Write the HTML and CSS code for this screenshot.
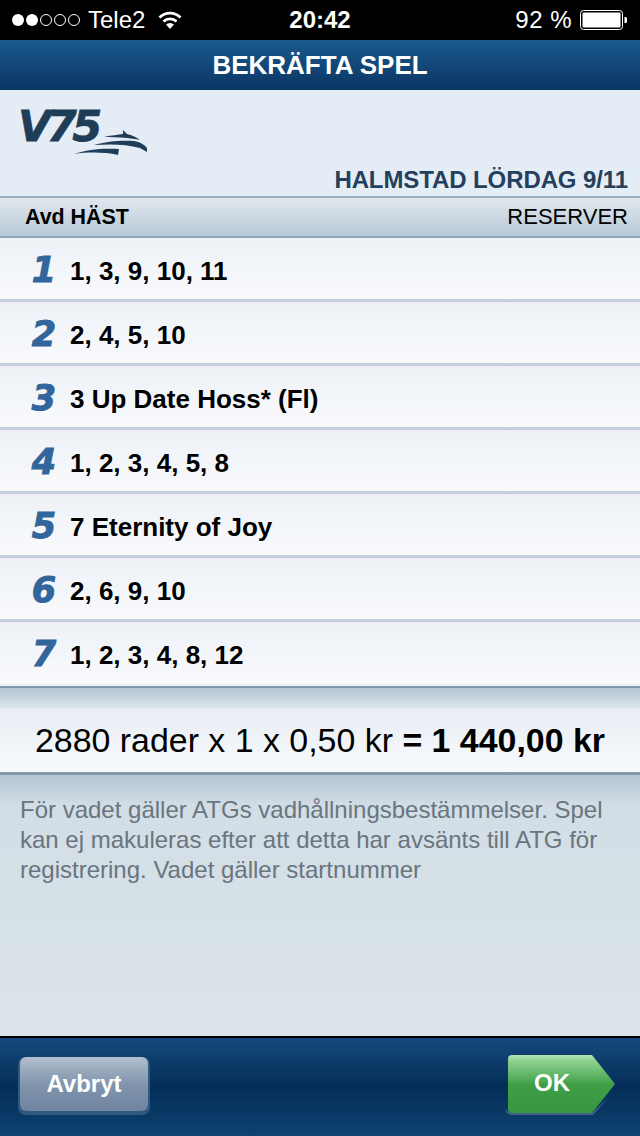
FILE: index.html
```html
<!DOCTYPE html>
<html>
<head>
  <meta charset="utf-8">
  <link rel="stylesheet" href="styles.css">
</head>
<body>
<div class="status">
  <div class="status-left">
    <svg class="signal" width="68" height="14" viewBox="0 0 68 14">
      <circle cx="6" cy="7" r="6" fill="#fff"/>
      <circle cx="20" cy="7" r="6" fill="#fff"/>
      <circle cx="34" cy="7" r="5.500" fill="none" stroke="#fff"/>
      <circle cx="48" cy="7" r="5.500" fill="none" stroke="#fff"/>
      <circle cx="62" cy="7" r="5.500" fill="none" stroke="#fff"/>
    </svg>
    <span class="carrier">Tele2</span>
    <svg class="wifi" width="24" height="18" viewBox="0 0 24 18">
      <path d="M1.500 6.500 A15 15 0 0 1 22.500 6.500" fill="none" stroke="#fff" stroke-width="2.800"/>
      <path d="M5.500 10.500 A9.500 9.500 0 0 1 18.500 10.500" fill="none" stroke="#fff" stroke-width="2.800"/>
      <path d="M12 18 L8 13.500 A6 6 0 0 1 16 13.500 Z" fill="#fff"/>
    </svg>
  </div>
  <div class="clock">20:42</div>
  <div class="status-right">
    <span>92 %</span>
    <svg width="48" height="20" viewBox="0 0 48 20">
      <rect x="0.500" y="0.500" width="42" height="19" rx="3" fill="none" stroke="#fff"/>
      <rect x="2.500" y="2.500" width="38" height="15" rx="1" fill="#fff"/>
      <path d="M44.500 7 h1 a1.500 1.500 0 0 1 1.500 1.500 v3 a1.500 1.500 0 0 1 -1.500 1.500 h-1 Z" fill="#fff"/>
    </svg>
  </div>
</div>

<header class="navbar">BEKRÄFTA SPEL</header>

<div class="game-head">
  <div class="logo">
    <span class="logo-text">V75</span>
    <svg class="logo-horse" width="74" height="28" viewBox="0 0 74 28">
      <path d="M30 9 C38 7 44 7 49 6 L49 2 L53 6 C58 7 62 9 66 12 C58 10 44 9 30 9 Z" fill="#1f3d57"/>
      <path d="M20 17 C32 13 50 12 60 13 C66 14 71 17 73 20 L73 24 L66 20 C52 16 36 16 20 17 Z" fill="#1f3d57"/>
      <path d="M0 26 C14 21 30 20 45 21 L44 27 C30 24 14 24 0 26 Z" fill="#1f3d57"/>
    </svg>
  </div>
  <div class="race">HALMSTAD LÖRDAG 9/11</div>
</div>

<div class="col-head">
  <span class="col-left">Avd HÄST</span>
  <span class="col-right">RESERVER</span>
</div>

<div class="rows">
  <div class="row"><span class="avd">1</span><span class="picks">1, 3, 9, 10, 11</span></div>
  <div class="row"><span class="avd">2</span><span class="picks">2, 4, 5, 10</span></div>
  <div class="row"><span class="avd">3</span><span class="picks">3 Up Date Hoss* (Fl)</span></div>
  <div class="row"><span class="avd">4</span><span class="picks">1, 2, 3, 4, 5, 8</span></div>
  <div class="row"><span class="avd">5</span><span class="picks">7 Eternity of Joy</span></div>
  <div class="row"><span class="avd">6</span><span class="picks">2, 6, 9, 10</span></div>
  <div class="row"><span class="avd">7</span><span class="picks">1, 2, 3, 4, 8, 12</span></div>
</div>

<div class="spacer"></div>

<div class="total">2880 rader x 1 x 0,50 kr <b>= 1 440,00 kr</b></div>

<div class="info">
  <p>För vadet gäller ATGs vadhållningsbestämmelser. Spel kan ej makuleras efter att detta har avsänts till ATG för registrering. Vadet gäller startnummer</p>
</div>

<footer class="toolbar">
  <div class="btn-cancel">Avbryt</div>
  <div class="btn-ok">
    <svg class="ok-shape" width="112" height="62" viewBox="0 0 112 62">
      <defs>
        <linearGradient id="okfill" x1="0" y1="0" x2="0" y2="1">
          <stop offset="0" stop-color="#b5e6b5"/>
          <stop offset="0.1" stop-color="#8fd292"/>
          <stop offset="0.45" stop-color="#4da853"/>
          <stop offset="0.5" stop-color="#3f9f47"/>
          <stop offset="1" stop-color="#379640"/>
        </linearGradient>
      </defs>
      <path d="M2 55 Q2 61 8 61 H89 L104 44 L88 59 H8 Q4 59 2 55 Z" fill="#3f6589"/>
      <path d="M8 1 H88 L111 30 L88 59 H8 Q4 59 4 55 V5 Q4 1 8 1 Z" fill="url(#okfill)"/>
    </svg>
    <span class="ok-label">OK</span>
  </div>
</footer>
</body>
</html>
```

FILE: styles.css
```css
html, body {
  margin: 0;
  padding: 0;
}
body {
  width: 640px;
  height: 1136px;
  display: flex;
  flex-direction: column;
  font-family: "Liberation Sans", Arial, sans-serif;
  background: #dbe4ea;
  overflow: hidden;
}

/* status bar */
.status {
  height: 40px;
  background: #000;
  color: #fff;
  display: grid;
  grid-template-columns: 1fr auto 1fr;
  align-items: center;
  font-size: 24px;
  padding: 0 12px;
  box-sizing: border-box;
}
.status-left {
  display: flex;
  align-items: center;
}
.carrier {
  margin-left: 8px;
}
.wifi {
  margin-left: 13px;
}
.clock {
  font-weight: bold;
}
.status-right {
  display: flex;
  justify-content: flex-end;
  align-items: center;
  gap: 8px;
  letter-spacing: 0.5px;
}

/* title bar */
.navbar {
  height: 50px;
  line-height: 50px;
  text-align: center;
  color: #fff;
  font-size: 26px;
  font-weight: bold;
  background: linear-gradient(#1b5a8e, #0a3563);
}

/* logo and race name */
.game-head {
  height: 108px;
  box-sizing: border-box;
  background: #e4edf6;
  border-bottom: 2px solid #97aec4;
  padding: 19px 12px 0 18px;
}
.logo {
  height: 57px;
  display: flex;
  align-items: flex-start;
  color: #1f3d57;
}
.logo-text {
  font-family: "DejaVu Sans", sans-serif;
  font-size: 43px;
  line-height: 34px;
  font-weight: bold;
  font-style: italic;
  letter-spacing: -4.500px;
  -webkit-text-stroke: 0.8px #1f3d57;
}
.logo-horse {
  margin: 19px 0 0 -24px;
}
.race {
  text-align: right;
  font-size: 24px;
  font-weight: bold;
  color: #24405c;
  letter-spacing: -0.1px;
}

/* column headings */
.col-head {
  height: 40px;
  box-sizing: border-box;
  display: flex;
  justify-content: space-between;
  align-items: center;
  padding: 0 12px 0 25px;
  font-size: 22px;
  color: #000;
  background: linear-gradient(#e0e8ee, #b7c8d6);
  border-bottom: 2px solid #8fa7bc;
}
.col-left {
  font-weight: bold;
  font-size: 21.400px;
}

/* the seven legs */
.rows {
  display: flex;
  flex-direction: column;
}
.row {
  height: 64px;
  box-sizing: border-box;
  display: flex;
  align-items: center;
  padding-top: 5px;
  background: linear-gradient(#edf1f6, #f9fafc);
  border-bottom: 3px solid #c5d0dc;
}
.row:last-child {
  border-bottom-color: transparent;
}
.avd {
  width: 58px;
  margin-left: 15px;
  margin-right: -3px;
  margin-top: -3px;
  box-sizing: border-box;
  text-align: center;
  font-family: "DejaVu Sans", sans-serif;
  font-size: 35px;
  line-height: 36px;
  font-weight: bold;
  font-style: italic;
  color: #32659b;
  -webkit-text-stroke: 1px #32659b;
}
.picks {
  font-size: 26px;
  font-weight: bold;
  color: #000;
}

.spacer {
  height: 22px;
  box-sizing: border-box;
  border-top: 2px solid #7f98ae;
  background: linear-gradient(#b4c5d3, #dbe4ea);
}

/* sum */
.total {
  height: 67px;
  line-height: 64px;
  box-sizing: border-box;
  text-align: center;
  font-size: 33.900px;
  color: #000;
  background: linear-gradient(#e8edf4, #f8fafc);
  border-bottom: 3px solid #7f98ae;
}

/* small print */
.info {
  flex: 1;
  padding: 20px 20px 0;
  background: linear-gradient(#b4c5d3, #d2dde5 30px, #dbe4ea);
  border-bottom: 2px solid #000;
}
.info p {
  margin: 0;
  font-size: 24px;
  line-height: 30px;
  color: #69757f;
}

/* bottom bar */
.toolbar {
  height: 98px;
  flex: none;
  box-sizing: border-box;
  display: flex;
  justify-content: space-between;
  align-items: flex-start;
  padding: 19px 24px 0 18px;
  background: linear-gradient(#164a7c, #042e58 50%, #0f4272);
}
.btn-cancel {
  width: 128px;
  height: 54px;
  margin-left: 2px;
  line-height: 54px;
  text-align: center;
  border-radius: 6px;
  color: #fff;
  font-size: 24px;
  font-weight: bold;
  background: linear-gradient(#b2bfcf, #8195ad 50%, #6f84a0);
  box-shadow: 0 2px 0 2px #31597f;
}
.btn-ok {
  position: relative;
  width: 112px;
  height: 62px;
  margin-top: -3px;
}
.ok-shape {
  display: block;
}
.ok-label {
  position: absolute;
  left: 30px;
  top: 15px;
  color: #fff;
  font-size: 24px;
  font-weight: bold;
}
```
